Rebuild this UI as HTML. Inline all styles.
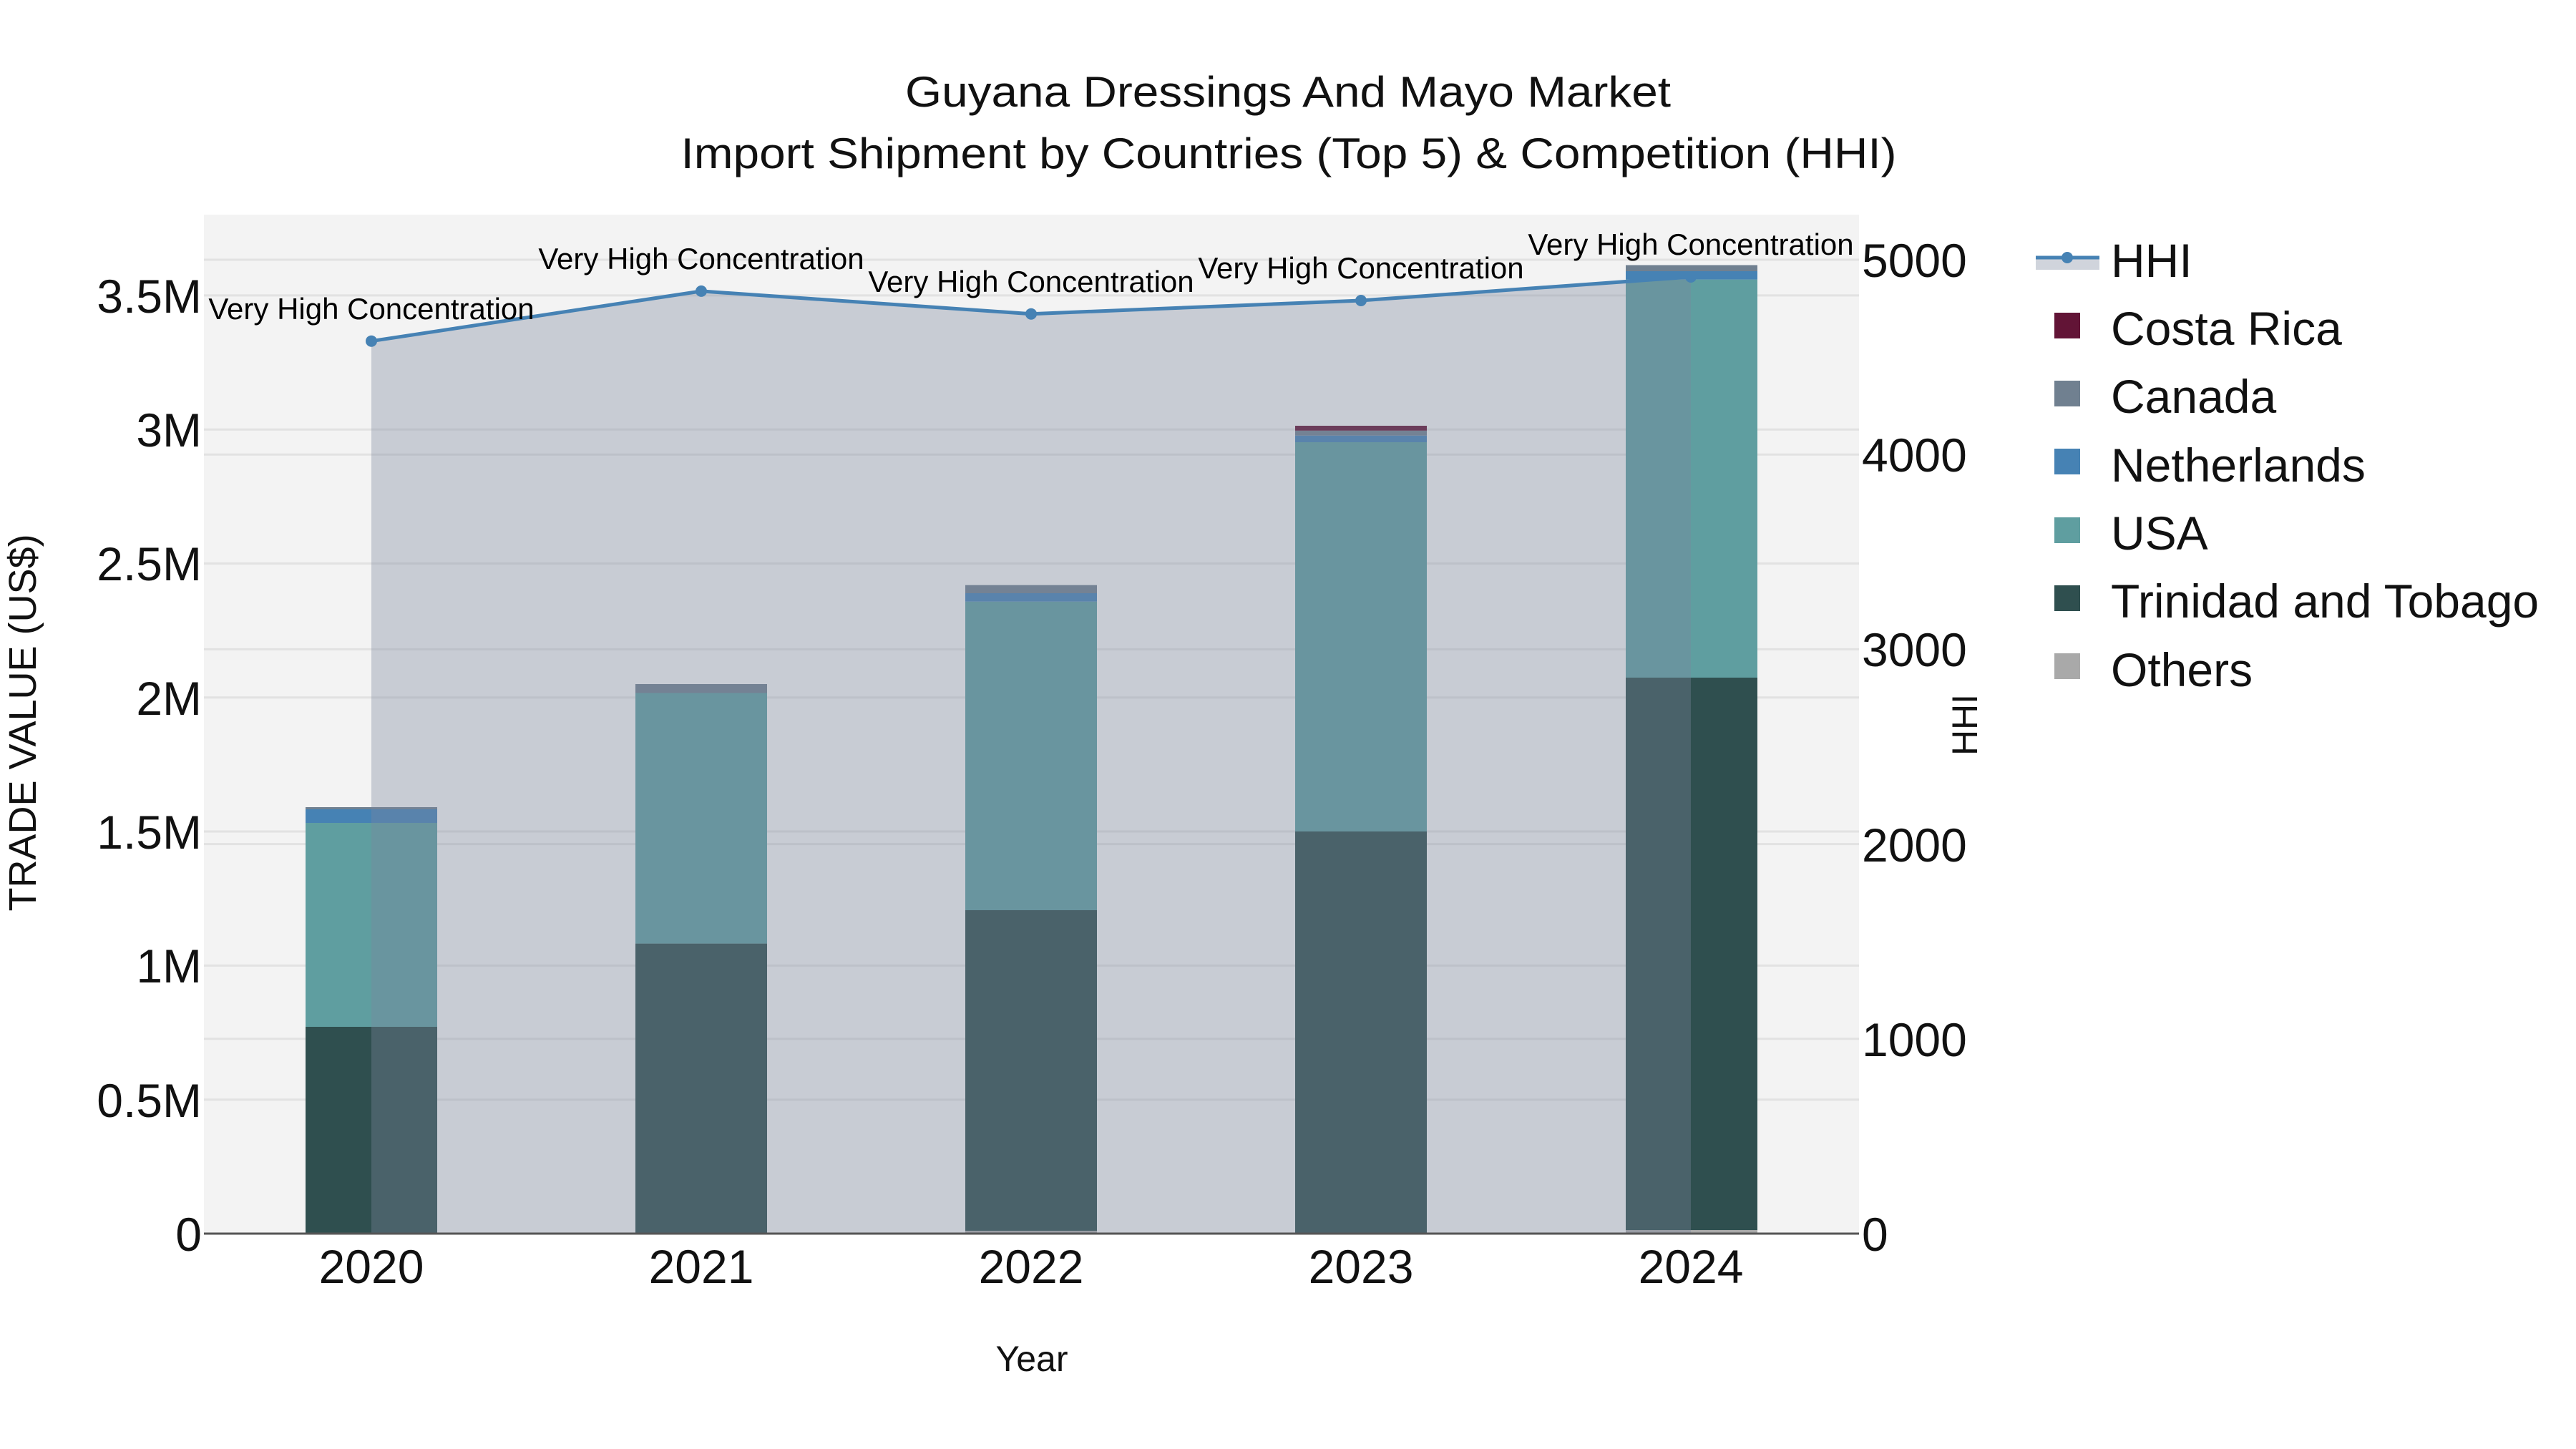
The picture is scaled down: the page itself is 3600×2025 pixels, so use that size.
<!DOCTYPE html>
<html><head><meta charset="utf-8"><style>
html,body{margin:0;padding:0;background:#fff;}
svg{display:block;font-family:"Liberation Sans",Arial,sans-serif;}
</style></head><body>
<svg width="3600" height="2025" viewBox="0 0 3600 2025" xmlns="http://www.w3.org/2000/svg">
<rect width="3600" height="2025" fill="#fff"/>
<rect x="285" y="300" width="2313" height="1424" fill="#f3f3f3"/>
<g stroke="#e2e2e2" stroke-width="3">
<line x1="285" x2="2598" y1="1536.7" y2="1536.7"/>
<line x1="285" x2="2598" y1="1349.4" y2="1349.4"/>
<line x1="285" x2="2598" y1="1162" y2="1162"/>
<line x1="285" x2="2598" y1="974.8" y2="974.8"/>
<line x1="285" x2="2598" y1="787.5" y2="787.5"/>
<line x1="285" x2="2598" y1="600.2" y2="600.2"/>
<line x1="285" x2="2598" y1="412.9" y2="412.9"/>
<line x1="285" x2="2598" y1="1451.8" y2="1451.8"/>
<line x1="285" x2="2598" y1="1179.6" y2="1179.6"/>
<line x1="285" x2="2598" y1="907.4" y2="907.4"/>
<line x1="285" x2="2598" y1="635.2" y2="635.2"/>
<line x1="285" x2="2598" y1="363" y2="363"/>
</g>
<g>
<rect x="427" y="1435" width="184" height="289" fill="#2F4F4F"/>
<rect x="427" y="1150" width="184" height="285" fill="#5F9EA0"/>
<rect x="427" y="1131" width="184" height="19" fill="#4682B4"/>
<rect x="427" y="1128" width="184" height="3" fill="#708090"/>

<rect x="888" y="1318.6" width="184" height="405.4" fill="#2F4F4F"/>
<rect x="888" y="968.5" width="184" height="350.1" fill="#5F9EA0"/>
<rect x="888" y="956" width="184" height="12.5" fill="#708090"/>

<rect x="1349" y="1720" width="184" height="4" fill="#A9A9A9"/>
<rect x="1349" y="1272" width="184" height="448" fill="#2F4F4F"/>
<rect x="1349" y="840.7" width="184" height="431.3" fill="#5F9EA0"/>
<rect x="1349" y="829" width="184" height="11.7" fill="#4682B4"/>
<rect x="1349" y="817.7" width="184" height="11.3" fill="#708090"/>

<rect x="1810" y="1162" width="184" height="562" fill="#2F4F4F"/>
<rect x="1810" y="618" width="184" height="544" fill="#5F9EA0"/>
<rect x="1810" y="608.7" width="184" height="9.3" fill="#4682B4"/>
<rect x="1810" y="601.8" width="184" height="6.9" fill="#708090"/>
<rect x="1810" y="595" width="184" height="6.8" fill="#621436"/>

<rect x="2272" y="1719" width="184" height="5" fill="#A9A9A9"/>
<rect x="2272" y="947" width="184" height="772" fill="#2F4F4F"/>
<rect x="2272" y="390.6" width="184" height="556.4" fill="#5F9EA0"/>
<rect x="2272" y="379" width="184" height="11.6" fill="#4682B4"/>
<rect x="2272" y="370.5" width="184" height="8.5" fill="#708090"/>
</g>
<polygon points="519,1724 519,476.7 980,406.9 1441,438.7 1902,420 2363,387 2363,1724" fill="rgb(123,134,156)" fill-opacity="0.357"/>
<polyline points="519,476.7 980,406.9 1441,438.7 1902,420 2363,387" fill="none" stroke="#4682B4" stroke-width="5"/>
<g fill="#4682B4">
<circle cx="519" cy="476.7" r="8"/><circle cx="980" cy="406.9" r="8"/><circle cx="1441" cy="438.7" r="8"/><circle cx="1902" cy="420" r="8"/><circle cx="2363" cy="387" r="8"/>
</g>
<line x1="285" x2="2598" y1="1724" y2="1724" stroke="#555" stroke-width="3"/>
<g font-size="42" text-anchor="middle" fill="#000">
<text x="519" y="446">Very High Concentration</text>
<text x="980" y="376">Very High Concentration</text>
<text x="1441" y="408">Very High Concentration</text>
<text x="1902" y="389">Very High Concentration</text>
<text x="2363" y="356">Very High Concentration</text>
</g>
<g font-size="60" text-anchor="middle" fill="#111">
<text x="1800" y="149" textLength="1070" lengthAdjust="spacingAndGlyphs">Guyana Dressings And Mayo Market</text>
<text x="1801" y="235" textLength="1699" lengthAdjust="spacingAndGlyphs">Import Shipment by Countries (Top 5) &amp; Competition (HHI)</text>
</g>
<g font-size="66" text-anchor="end" fill="#111">
<text x="282" y="1748">0</text>
<text x="282" y="1561">0.5M</text>
<text x="282" y="1373">1M</text>
<text x="282" y="1186">1.5M</text>
<text x="282" y="999">2M</text>
<text x="282" y="811">2.5M</text>
<text x="282" y="624">3M</text>
<text x="282" y="437">3.5M</text>
</g>
<g font-size="66" fill="#111">
<text x="2602" y="1748">0</text>
<text x="2602" y="1476">1000</text>
<text x="2602" y="1204">2000</text>
<text x="2602" y="931">3000</text>
<text x="2602" y="659">4000</text>
<text x="2602" y="387">5000</text>
</g>
<g font-size="66" text-anchor="middle" fill="#111">
<text x="519" y="1793">2020</text>
<text x="980" y="1793">2021</text>
<text x="1441" y="1793">2022</text>
<text x="1902" y="1793">2023</text>
<text x="2363" y="1793">2024</text>
</g>
<text x="1442" y="1916" font-size="50" text-anchor="middle" fill="#111">Year</text>
<text transform="translate(50,1010) rotate(-90)" font-size="54" text-anchor="middle" fill="#111">TRADE VALUE (US$)</text>
<text transform="translate(2763,1013) rotate(-90)" font-size="50" text-anchor="middle" fill="#111">HHI</text>
<rect x="2845" y="362" width="89" height="15" fill="#d0d4dc"/>
<line x1="2845" x2="2934" y1="360" y2="360" stroke="#4682B4" stroke-width="5"/>
<circle cx="2889" cy="360" r="8" fill="#4682B4"/>
<rect x="2871" y="437" width="36" height="36" fill="#621436"/>
<rect x="2871" y="532" width="36" height="36" fill="#708090"/>
<rect x="2871" y="627" width="36" height="36" fill="#4682B4"/>
<rect x="2871" y="723" width="36" height="36" fill="#5F9EA0"/>
<rect x="2871" y="818" width="36" height="36" fill="#2F4F4F"/>
<rect x="2871" y="913" width="36" height="36" fill="#A9A9A9"/>
<g font-size="66" fill="#111">
<text x="2950" y="387">HHI</text>
<text x="2950" y="482">Costa Rica</text>
<text x="2950" y="577">Canada</text>
<text x="2950" y="673">Netherlands</text>
<text x="2950" y="768">USA</text>
<text x="2950" y="863">Trinidad and Tobago</text>
<text x="2950" y="959">Others</text>
</g>
</svg>
</body></html>
